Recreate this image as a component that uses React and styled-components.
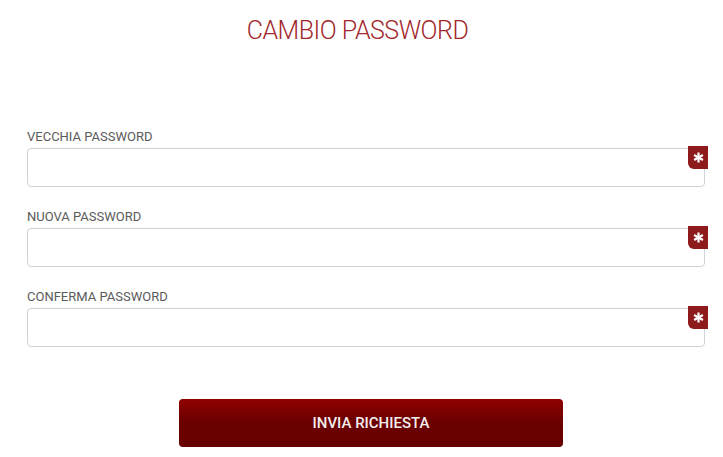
import React from "react";
import styled, { createGlobalStyle } from "styled-components";

const GlobalStyle = createGlobalStyle`
  body {
    margin: 0;
    background: #fff;
    font-family: Roboto, "Liberation Sans", Arial, sans-serif;
  }
`;

const Page = styled.div`
  width: 723px;
  padding-top: 16px;
  box-sizing: border-box;
`;

const Title = styled.h1`
  margin: 0;
  text-align: center;
  font-family: Roboto, "Liberation Sans", sans-serif;
  font-weight: 300;
  font-size: 25px;
  line-height: 30px;
  letter-spacing: -0.5px;
  color: #a1282b;
  padding-right: 8px;
`;

const Form = styled.form`
  display: flex;
  flex-direction: column;
  gap: 23px;
  padding: 84px 18px 0 27px;
`;

const Field = styled.div`
  display: flex;
  flex-direction: column;
  gap: 4px;
`;

const Label = styled.label`
  font-size: 13px;
  line-height: 14px;
  color: #5a5a5a;
  text-transform: uppercase;
`;

const InputWrap = styled.div`
  position: relative;
`;

const Input = styled.input`
  display: block;
  width: 100%;
  height: 39px;
  box-sizing: border-box;
  border: 1px solid #cfd3d7;
  border-radius: 4px;
  padding: 0 10px;
  font-size: 14px;
  outline: none;
`;

const Required = styled.span`
  position: absolute;
  top: -2px;
  right: -3px;
  width: 20px;
  height: 23px;
  background: #8e1b1b;
  border-radius: 0 0 0 6px;
  display: flex;
  align-items: center;
  justify-content: center;
`;

const Submit = styled.button`
  margin: 29px 0 0 152px;
  width: 384px;
  height: 48px;
  border: none;
  border-radius: 4px;
  background: linear-gradient(to bottom, #910000 0%, #6c0000 45%, #660000 100%);
  color: #f3eeee;
  font-family: Roboto, "Liberation Sans", sans-serif;
  font-weight: 500;
  font-size: 15px;
  text-transform: uppercase;
  cursor: pointer;
`;

const Asterisk = () => (
  <svg width="11" height="11" viewBox="0 0 12 12" fill="none" stroke="#fff" strokeWidth="2.4">
    <line x1="6" y1="0.5" x2="6" y2="11.5" />
    <line x1="1.2" y1="3.2" x2="10.8" y2="8.8" />
    <line x1="1.2" y1="8.8" x2="10.8" y2="3.2" />
  </svg>
);

const fields = ["Vecchia password", "Nuova password", "Conferma password"];

const App = () => {
  return (
    <Page>
      <GlobalStyle />
      <Title>CAMBIO PASSWORD</Title>
      <Form onSubmit={(e) => e.preventDefault()}>
        {fields.map((f) => (
          <Field key={f}>
            <Label>{f}</Label>
            <InputWrap>
              <Input type="password" />
              <Required>
                <Asterisk />
              </Required>
            </InputWrap>
          </Field>
        ))}
        <Submit type="submit">Invia richiesta</Submit>
      </Form>
    </Page>
  );
};

export default App;
